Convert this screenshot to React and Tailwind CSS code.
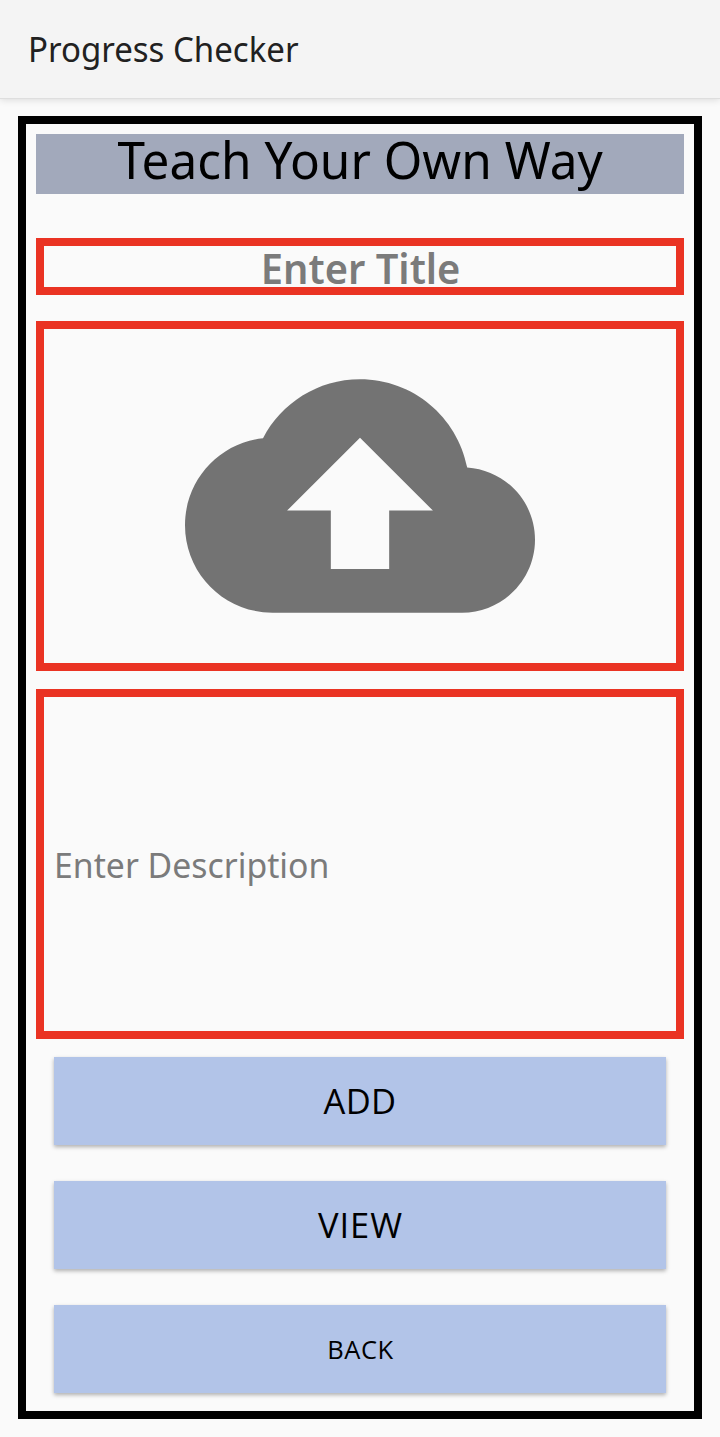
function ActionButton({ children, size = "text-[34.5px] tracking-[0.4px]" }) {
  return (
    <button
      type="button"
      className="flex h-[88px] items-center justify-center bg-[#b2c4e8] font-['Open_Sans',sans-serif] text-black shadow-[0_2px_4px_rgba(0,0,0,0.3)]"
    >
      <span className={`leading-[86px] ${size}`}>{children}</span>
    </button>
  );
}

export default function App() {
  return (
    <div className="flex h-[1437px] w-[720px] flex-col bg-[#fafafa] font-['Noto_Sans',sans-serif]">
      <header className="h-[98px] w-full bg-[#f4f4f4] pl-[28px] shadow-[0_1px_0_#dedede,0_2px_7px_rgba(0,0,0,0.13)]">
        <h1 className="text-[35px] leading-[98px] whitespace-nowrap text-[#212121]">
          <span className="inline-block origin-left scale-x-[0.943]">Progress Checker</span>
        </h1>
      </header>
      <main className="mx-[18px] mt-[18px] flex h-[1303px] flex-col border-8 border-black p-[10px]">
        <h2 className="h-[60px] bg-[#a2a9bb] text-center text-[51px] leading-[51px] whitespace-nowrap text-black">
          <span className="inline-block scale-x-[0.97]">Teach Your Own Way</span>
        </h2>
        <div className="mt-[44px] h-[57px] border-8 border-[#ea3323] pl-[2px] text-center text-[41px] leading-[44px] font-semibold whitespace-nowrap text-[#7b7b7b]">
          <span className="inline-block scale-x-[0.972]">Enter Title</span>
        </div>
        <div className="mt-[26px] flex h-[350px] items-center justify-center border-8 border-[#ea3323]">
          <svg viewBox="0 0 24 24" className="h-[350px] w-[350px] shrink-0" fill="#737373">
            <path d="M19.35 10.04C18.67 6.59 15.64 4 12 4 9.11 4 6.6 5.64 5.35 8.04 2.34 8.36 0 10.91 0 14c0 3.31 2.69 6 6 6h13c2.76 0 5-2.24 5-5 0-2.64-2.05-4.78-4.65-4.96zM14 13v4h-4v-4H7l5-5 5 5h-3z" />
          </svg>
        </div>
        <div className="mt-[18px] h-[350px] border-8 border-[#ea3323] pl-[10px] text-[35px] leading-[335px] whitespace-nowrap text-[#7b7b7b]">
          <span className="inline-block origin-left scale-x-[0.965]">Enter Description</span>
        </div>
        <div className="mx-[18px] mt-[18px] flex flex-col gap-[36px]">
          <ActionButton>ADD</ActionButton>
          <ActionButton size="text-[34.5px] tracking-[0.9px] pl-px">VIEW</ActionButton>
          <ActionButton size="text-[25.5px] tracking-[0.6px] pl-px">BACK</ActionButton>
        </div>
      </main>
    </div>
  );
}
